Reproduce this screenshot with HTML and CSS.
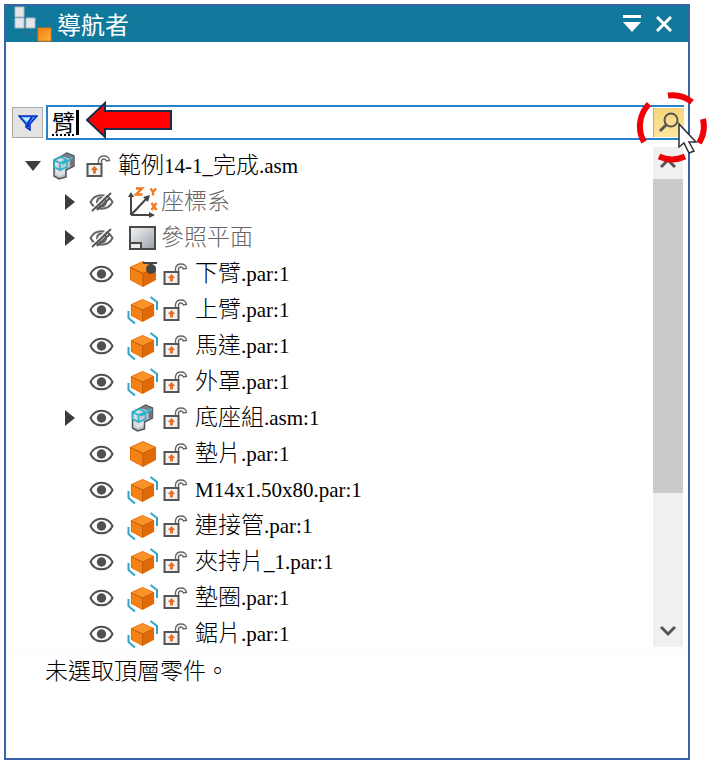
FILE: index.html
```
<!DOCTYPE html>
<html lang="zh-Hant">
<head>
  <meta charset="UTF-8" />
  <meta name="viewport" content="width=device-width, initial-scale=1.0" />
  <title>導航者</title>
  <link rel="stylesheet" href="styles.css">
</head>
<body>

  <!-- Icons -->
  <svg class="sprites" width="0" height="0" aria-hidden="true">
    <defs>
      <linearGradient id="steel" x1="0" y1="0" x2="1" y2="1">
        <stop offset="0" stop-color="#f4f6f8" />
        <stop offset="1" stop-color="#9a9fa6" />
      </linearGradient>
      <linearGradient id="amber" x1="0" y1="0" x2="1" y2="1">
        <stop offset="0" stop-color="#f07f10" />
        <stop offset="1" stop-color="#ffb13d" />
      </linearGradient>
    </defs>
    <symbol id="open" viewBox="0 0 16 10"><path d="M0 0H16L8 10Z" fill="#3d3d3d" /></symbol>
    <symbol id="closed" viewBox="0 0 10 16"><path d="M0 0L10 8L0 16Z" fill="#3d3d3d" /></symbol>
    <symbol id="eye" viewBox="0 0 25 18">
      <path d="M1.5 9C6 -.8 19 -.8 23.500 9C19 18.800 6 18.800 1.500 9Z" fill="#fff" stroke="#505050" stroke-width="2" />
      <circle cx="12.500" cy="9" r="4.700" fill="#505050" />
    </symbol>
    <symbol id="hidden" viewBox="0 0 25 20">
      <path d="M1.500 10C6 1 19 1 23.500 10C19 19 6 19 1.500 10Z" fill="#fff" stroke="#666" stroke-width="2" />
      <circle cx="12.500" cy="10" r="4.500" fill="#bbb" stroke="#666" stroke-width="2" />
      <path d="M3 17L20 0" stroke="#fff" stroke-width="1.500" />
      <path d="M3 19L22 1M8 18L21 6" stroke="#555" stroke-width="1.800" />
    </symbol>
    <symbol id="lock" viewBox="0 0 25 22">
      <path d="M12.500 9V5.500C13 2.500 15.500 1 18 1C21 1 23.500 3 23.500 5.500L20.500 6C20 4.500 19 3.800 17.500 4C16 4.200 15.500 5 15.500 6.500V9" fill="#fff" stroke="#666" stroke-width="1.400" />
      <path d="M1.500 9H15.500V21H1.500Z" fill="#f3f3f5" stroke="#555" stroke-width="2" />
      <path d="M8.500 11L12 14.500L10 15.500V18.500H7V15.500L5 14.500Z" fill="#e6722e" />
    </symbol>
    <symbol id="cube" viewBox="0 0 28 28">
      <path d="M14 1L27 7V20L14 27L1 20V7Z" fill="#e06a08" />
      <path d="M14 2L26 7.500L14 13L2 7.500Z" fill="#fb9428" />
      <path d="M2 8.500L13.500 14V26L2 19.500Z" fill="#f28314" />
      <path d="M1.500 7.500L14 13.500L26.500 7.500M14 13.500V26.500" fill="none" stroke="#c65b08" />
    </symbol>
    <symbol id="part" viewBox="0 0 31 28"><use href="#cube" x="2" y="0" width="28" height="28" /></symbol>
    <symbol id="grounded" viewBox="0 0 31 28">
      <use href="#cube" x="2" y="0" width="28" height="28" />
      <path d="M16 3H30M24 3V8" stroke="#454545" stroke-width="2" />
      <circle cx="24" cy="9" r="5" fill="#454545" />
    </symbol>
    <symbol id="linked" viewBox="0 0 31 28">
      <use href="#cube" x="3" y="2" width="25" height="25" />
      <path d="M23.500 1L30 6V14M1.500 15V22L8 27.500" fill="none" stroke="#2fa6c4" stroke-width="2" />
    </symbol>
    <symbol id="asm" viewBox="0 0 24 28">
      <path d="M10 4L15 1L22 4V14L14 18V25L7 27L2 24V8Z" fill="url(#steel)" stroke="#50545c" stroke-width="1.500" />
      <path d="M14 1.500L22 4.500L18 7L10 4Z" fill="#777b83" />
      <path d="M19 7V14M21 6V14" stroke="#71747c" stroke-width="2" />
      <path d="M2 8L9 5L15 8V15L8 18L2 15ZM2 8L8 11L15 8M8 11V18M10 12L18 8V4" fill="none" stroke="#29b3cd" stroke-width="1.600" />
      <path d="M4 17.500L8 19.500L13 17V22L8 24L4 22Z" fill="#dde1e7" />
    </symbol>
    <symbol id="axes" viewBox="0 0 31 31">
      <path d="M4 28V9M4 28H24M4 28L20 11" fill="none" stroke="#444" stroke-width="2" />
      <path d="M4 5L7 10H1ZM28 28L22 31V25ZM23 8L21 15L16 10Z" fill="#444" />
      <path d="M9 1.500H15L9 7.500H15.500M23.500 1.500L26 5L29 1.500M26 5V8.500M24.500 16L29.500 23M29.500 16L24.500 23" fill="none" stroke="#f07a20" stroke-width="2.400" />
    </symbol>
    <symbol id="plane" viewBox="0 0 31 28">
      <path d="M3 3H28V25H3Z" fill="url(#steel)" stroke="#4a4a4a" stroke-width="2" />
      <path d="M3 19H14V25H3Z" fill="#eee" stroke="#4a4a4a" stroke-width="2" />
    </symbol>
  </svg>

  <main class="panel">
    <header class="titlebar">
      <svg class="logo" viewBox="0 0 38 36" aria-hidden="true">
        <path d="M11 21V28H24" fill="none" stroke="#3d6d82" />
        <path d="M1 1H10V11H1ZM1 12H10V22H1ZM12 12H21V22H12Z" fill="#e3e6e9" stroke="#aab9c1" />
        <path d="M24 22H37V35H24Z" fill="url(#amber)" stroke="#e47914" />
      </svg>
      <h1>導航者</h1>
      <button type="button" class="title-btn" aria-label="選項">
        <svg width="20" height="18" viewBox="0 0 20 18"><path d="M1 0H19V3H1ZM1 7H19L10 17Z" fill="#fff" /></svg>
      </button>
      <button type="button" class="title-btn" aria-label="關閉">
        <svg width="16" height="16" viewBox="0 0 16 16"><path d="M1 1L15 15M15 1L1 15" stroke="#fff" stroke-width="3" /></svg>
      </button>
    </header>

    <!-- Search -->
    <form class="search">
      <button type="button" class="filter" aria-label="篩選">
        <svg width="20" height="16" viewBox="0 0 20 16">
          <path d="M1 1H19L12 9V15L8 12V9Z" fill="#36a3ff" stroke="#0b2bb8" stroke-width="1.500" />
          <path d="M4 2.500H13L9 7Z" fill="#c6efff" />
          <path d="M14 2L10 8V12" fill="none" stroke="#0b2bd0" stroke-width="2" />
        </svg>
      </button>
      <div class="field">
        <input type="text" value="臂" aria-label="搜尋">
        <span class="text-caret"></span>
        <svg class="arrow" width="88" height="40" viewBox="0 0 88 40" aria-hidden="true">
          <path d="M2 20L20 3V11H86V29H20V37Z" fill="#f00" stroke="#1c2b4a" stroke-width="2" />
        </svg>
        <button type="submit" class="go" aria-label="尋找">
          <svg width="22" height="22" viewBox="0 0 22 22">
            <circle cx="13" cy="8" r="6.500" fill="none" stroke="#555" stroke-width="2" />
            <path d="M9 12L2 19" stroke="#555" stroke-width="3" />
          </svg>
        </button>
        <svg class="ring" width="76" height="76" viewBox="-38 -38 76 76" aria-hidden="true">
          <path d="M-4 -31.500A32 32 0 0 1 20 -25M31 -8A32 32 0 0 1 27 16M13 29.500A32 32 0 0 1 -13 29.500M-28 15A32 32 0 0 1 -23 -23" fill="none" stroke="#f00006" stroke-width="6" />
          <path d="M7 -3V20L12 16L17 26L22 24L17 15H24Z" fill="#fff" stroke="#30303a" stroke-width="1.500" />
        </svg>
      </div>
    </form>

    <!-- Parts -->
    <div class="view">
      <ul class="tree">
        <li class="row root">
          <button type="button" class="toggle" aria-label="收合"><svg width="16" height="10"><use href="#open" /></svg></button>
          <svg class="root-icon"><use href="#asm" /></svg>
          <svg class="lock"><use href="#lock" /></svg>
          <span class="name">範例<span class="latin">14-1_</span>完成<span class="latin">.asm</span></span>
        </li>
        <li class="row muted">
          <button type="button" class="toggle" aria-label="展開"><svg width="10" height="16"><use href="#closed" /></svg></button>
          <button type="button" class="eye" aria-label="顯示"><svg width="25" height="20"><use href="#hidden" /></svg></button>
          <svg class="icon axes"><use href="#axes" /></svg>
          <span class="name">座標系</span>
        </li>
        <li class="row muted">
          <button type="button" class="toggle" aria-label="展開"><svg width="10" height="16"><use href="#closed" /></svg></button>
          <button type="button" class="eye" aria-label="顯示"><svg width="25" height="20"><use href="#hidden" /></svg></button>
          <svg class="icon"><use href="#plane" /></svg>
          <span class="name">參照平面</span>
        </li>
        <li class="row">
          <button type="button" class="eye" aria-label="隱藏"><svg width="25" height="18"><use href="#eye" /></svg></button>
          <svg class="icon"><use href="#grounded" /></svg>
          <svg class="lock"><use href="#lock" /></svg>
          <span class="name">下臂<span class="latin">.par:1</span></span>
        </li>
        <li class="row">
          <button type="button" class="eye" aria-label="隱藏"><svg width="25" height="18"><use href="#eye" /></svg></button>
          <svg class="icon"><use href="#linked" /></svg>
          <svg class="lock"><use href="#lock" /></svg>
          <span class="name">上臂<span class="latin">.par:1</span></span>
        </li>
        <li class="row">
          <button type="button" class="eye" aria-label="隱藏"><svg width="25" height="18"><use href="#eye" /></svg></button>
          <svg class="icon"><use href="#linked" /></svg>
          <svg class="lock"><use href="#lock" /></svg>
          <span class="name">馬達<span class="latin">.par:1</span></span>
        </li>
        <li class="row">
          <button type="button" class="eye" aria-label="隱藏"><svg width="25" height="18"><use href="#eye" /></svg></button>
          <svg class="icon"><use href="#linked" /></svg>
          <svg class="lock"><use href="#lock" /></svg>
          <span class="name">外罩<span class="latin">.par:1</span></span>
        </li>
        <li class="row">
          <button type="button" class="toggle" aria-label="展開"><svg width="10" height="16"><use href="#closed" /></svg></button>
          <button type="button" class="eye" aria-label="隱藏"><svg width="25" height="18"><use href="#eye" /></svg></button>
          <svg class="icon"><use href="#asm" /></svg>
          <svg class="lock"><use href="#lock" /></svg>
          <span class="name">底座組<span class="latin">.asm:1</span></span>
        </li>
        <li class="row">
          <button type="button" class="eye" aria-label="隱藏"><svg width="25" height="18"><use href="#eye" /></svg></button>
          <svg class="icon"><use href="#part" /></svg>
          <svg class="lock"><use href="#lock" /></svg>
          <span class="name">墊片<span class="latin">.par:1</span></span>
        </li>
        <li class="row">
          <button type="button" class="eye" aria-label="隱藏"><svg width="25" height="18"><use href="#eye" /></svg></button>
          <svg class="icon"><use href="#linked" /></svg>
          <svg class="lock"><use href="#lock" /></svg>
          <span class="name"><span class="latin">M14x1.50x80.par:1</span></span>
        </li>
        <li class="row">
          <button type="button" class="eye" aria-label="隱藏"><svg width="25" height="18"><use href="#eye" /></svg></button>
          <svg class="icon"><use href="#linked" /></svg>
          <svg class="lock"><use href="#lock" /></svg>
          <span class="name">連接管<span class="latin">.par:1</span></span>
        </li>
        <li class="row">
          <button type="button" class="eye" aria-label="隱藏"><svg width="25" height="18"><use href="#eye" /></svg></button>
          <svg class="icon"><use href="#linked" /></svg>
          <svg class="lock"><use href="#lock" /></svg>
          <span class="name">夾持片<span class="latin">_1.par:1</span></span>
        </li>
        <li class="row">
          <button type="button" class="eye" aria-label="隱藏"><svg width="25" height="18"><use href="#eye" /></svg></button>
          <svg class="icon"><use href="#linked" /></svg>
          <svg class="lock"><use href="#lock" /></svg>
          <span class="name">墊圈<span class="latin">.par:1</span></span>
        </li>
        <li class="row">
          <button type="button" class="eye" aria-label="隱藏"><svg width="25" height="18"><use href="#eye" /></svg></button>
          <svg class="icon"><use href="#linked" /></svg>
          <svg class="lock"><use href="#lock" /></svg>
          <span class="name">鋸片<span class="latin">.par:1</span></span>
        </li>
      </ul>

      <div class="scrollbar">
        <button type="button" aria-label="向上"><svg width="16" height="12" viewBox="0 0 16 12"><path d="M1 10L8 3L15 10" /></svg></button>
        <div class="track"><div class="thumb"></div></div>
        <button type="button" aria-label="向下"><svg width="16" height="12" viewBox="0 0 16 12"><path d="M1 2L8 9L15 2" /></svg></button>
      </div>
    </div>

    <p class="status">未選取頂層零件。</p>
  </main>

</body>
</html>
```
FILE: styles.css
```
* {
  box-sizing: border-box;
}

body {
  margin: 0;
  padding: 4px 28px 5px 4px;
  background: #fff;
  color: #000;
  font-family: "Liberation Serif", "Noto Sans CJK TC", serif;
  font-size: 23px;
  font-weight: 300;
}

button {
  display: flex;
  align-items: center;
  justify-content: center;
  padding: 0;
  border: none;
  background: none;
  cursor: pointer;
}

svg {
  display: block;
  flex: none;
}

.sprites {
  position: absolute;
}

.panel {
  min-height: calc(100vh - 9px);
  border: 2px solid #3a62a8;
  background: #fff;
}

/* Title bar */
.titlebar {
  display: flex;
  align-items: center;
  height: 36px;
  padding: 0 8px 0 8px;
  background: #10789b;
  color: #fff;
}

.logo {
  width: 38px;
  height: 36px;
}

.titlebar h1 {
  flex: 1;
  margin: 0 0 0 5px;
  font-family: "Noto Sans CJK TC", sans-serif;
  font-size: 24px;
  font-weight: 400;
  line-height: 34px;
}

.title-btn {
  width: 32px;
  height: 32px;
}

/* Search row */
.search {
  display: flex;
  align-items: center;
  gap: 3px;
  margin: 63px 4px 0 6px;
}

.filter {
  width: 31px;
  height: 31px;
  border: 1px solid #aaa;
  background: #e3e3e3;
}

.field {
  position: relative;
  display: flex;
  flex: 1;
  align-items: center;
  height: 35px;
  border: 2px solid #2583cc;
  border-right: none;
}

.field input {
  flex: 1;
  min-width: 0;
  height: 31px;
  padding: 0 4px 4px;
  border: none;
  outline: none;
  background: none;
  font: inherit;
  font-weight: 400;
  text-decoration: underline dotted 2px;
  text-underline-offset: 4px;
}

.text-caret {
  position: absolute;
  top: 3px;
  left: 28px;
  width: 3px;
  height: 25px;
  background: #000;
}

.arrow {
  position: absolute;
  top: -7px;
  left: 37px;
}

.go {
  width: 31px;
  height: 29px;
  border-left: 1px solid #8bb5d8;
  background: linear-gradient(#f6d47c, #ffe69c);
}

.ring {
  position: absolute;
  top: -18px;
  right: -26px;
  z-index: 1;
}

/* Tree */
.view {
  display: flex;
  margin-top: 7px;
  padding: 0 5px 0 6px;
}

.tree {
  flex: 1;
  min-width: 0;
  margin: 0;
  padding: 1px 0 0;
  list-style: none;
}

.row {
  display: flex;
  align-items: center;
  height: 36px;
  padding-left: 77px;
}

.row.root {
  padding-left: 13px;
}

.toggle {
  width: 16px;
  height: 24px;
  margin-left: -27px;
  margin-right: 11px;
}

.root .toggle {
  margin-left: 0;
}

.root-icon {
  width: 24px;
  height: 28px;
}

.eye {
  width: 25px;
  height: 24px;
}

.icon {
  width: 31px;
  height: 28px;
  margin-left: 13px;
}

.icon.axes {
  height: 31px;
}

.lock {
  width: 25px;
  height: 22px;
  margin-left: 5px;
}

.root .lock {
  margin-left: 10px;
}

.name {
  margin-left: 7px;
  line-height: 36px;
  white-space: nowrap;
}

.latin {
  font-size: 21px;
}

.muted .name {
  margin-left: 3px;
  color: #666;
}

/* Scrollbar */
.scrollbar {
  display: flex;
  flex-direction: column;
  width: 30px;
  margin-bottom: 5px;
  background: #f0f0f0;
}

.scrollbar button {
  width: 30px;
  height: 32px;
}

.scrollbar path {
  fill: none;
  stroke: #555;
  stroke-width: 3;
}

.track {
  flex: 1;
}

.thumb {
  height: 72%;
  background: #cbcbcb;
}

.status {
  margin: 0;
  padding: 0 39px;
  border-top: 1px solid #fafafa;
  line-height: 38px;
}
```
